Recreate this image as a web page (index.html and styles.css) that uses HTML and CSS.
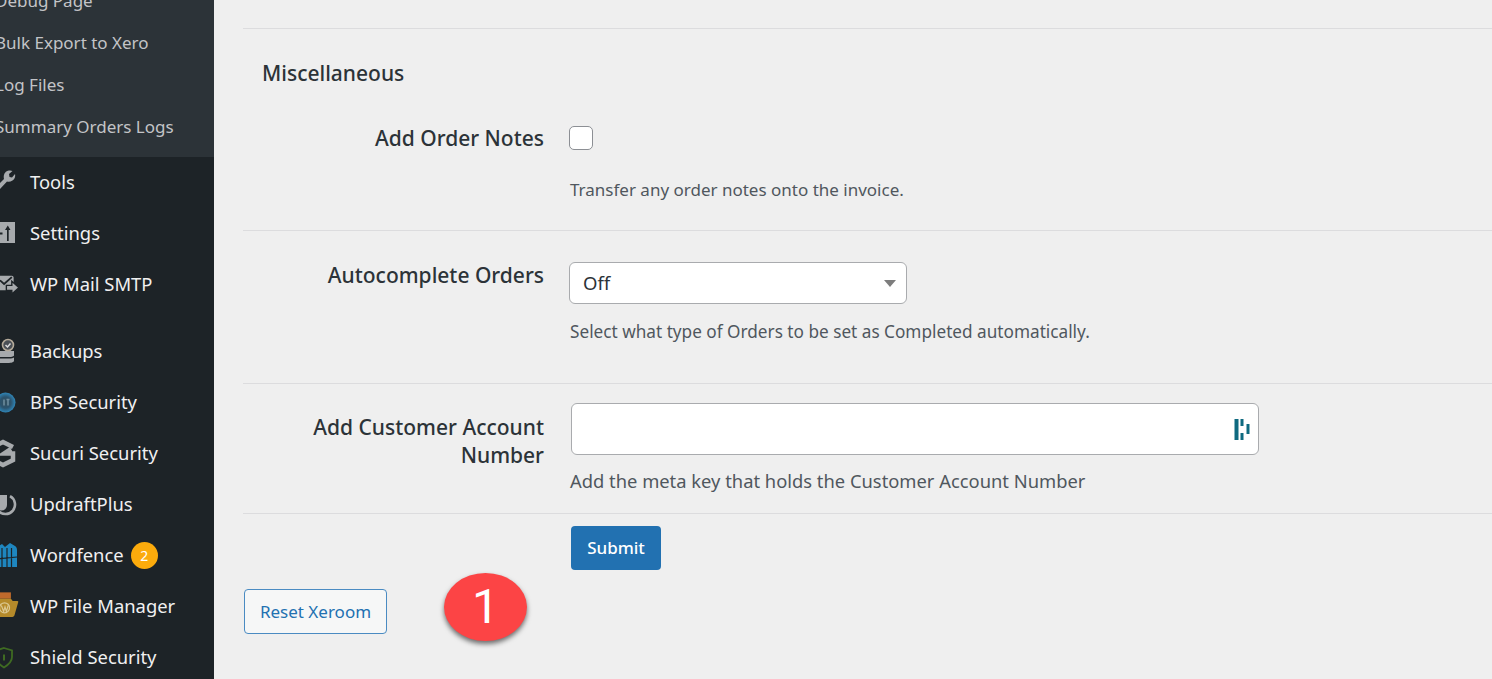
FILE: index.html
```html
<!DOCTYPE html>
<html lang="en">
<head>
<meta charset="utf-8">
<title>Xeroom settings</title>
<link rel="stylesheet" href="styles.css">
</head>
<body>
<div class="page">
  <nav class="sidebar">
    <ul class="submenu">
      <li>Debug Page</li>
      <li>Bulk Export to Xero</li>
      <li>Log Files</li>
      <li>Summary Orders Logs</li>
    </ul>
    <ul class="menu">
      <li><svg class="icon" viewBox="0 0 20 24"><path fill="#a7aaad" d="M-4 17L4 9C3 5 5 1 9 .5C10.500 .3 11.500 .5 12.500 1L9 4L9.500 7L12 7.500L15 4C15.500 6 15 9 12.500 10.500C10.500 11.800 8.500 12 7 11.500L0 19C-1 20-3 20-4 19z"/></svg>Tools</li>
      <li><svg class="icon" viewBox="0 0 20 24"><path fill="#a7aaad" d="M-3 1h18v21h-18z"/><path fill="#1d2327" d="M7 9H5L7.800 4.500L10.500 9H8.700V20H7zM-1 11.500h3.500v2h-3.500z"/></svg>Settings</li>
      <li class="gap-after"><svg class="icon" viewBox="0 0 22 24"><path fill="#a7aaad" d="M-3 3h16c1 0 2 1 2 2v14h-18z"/><path fill="none" stroke="#1d2327" stroke-width="2" d="M0 8l4.500 4L13 4.500"/><path fill="#a7aaad" stroke="#1d2327" stroke-width="1.500" d="M7 13.500h6V9l8 7-8 7v-4H7z"/></svg>WP Mail SMTP</li>
      <li><svg class="icon" viewBox="0 0 20 24"><path fill="#a7aaad" d="M-6 12h20v4.500c0 .8-2 1.500-5 1.500H-6zM-6 19.500H9c2 0 5-.5 5-1v3.500c0 1-3 2-6 2H-6z"/><circle cx="8" cy="6" r="5.500" fill="#4a4f55" stroke="#b5aa9a" stroke-width="1.600"/><path d="M5.500 6l2 2 3-3.500" fill="none" stroke="#dcdcde" stroke-width="1.500"/></svg>Backups</li>
      <li><svg class="icon" viewBox="0 0 20 24"><defs><radialGradient id="bps"><stop offset="0" stop-color="#33505f"/><stop offset=".55" stop-color="#2c536d"/><stop offset="1" stop-color="#2f86b8"/></radialGradient></defs><circle cx="5.500" cy="12.500" r="10" fill="url(#bps)"/><path stroke="#6f8ea0" stroke-width="1.500" d="M4 9.500v6M8 9.500v6M6.500 9.500h3"/></svg>BPS Security</li>
      <li><svg class="icon" viewBox="0 0 20 24"><path fill="none" stroke="#a7aaad" stroke-width="4.500" d="M13 6L3 1L-7 6V19L3 24L13 19V12.500H4L11 8"/></svg>Sucuri Security</li>
      <li><svg class="icon" viewBox="0 0 20 24"><path fill="none" stroke="#a7aaad" stroke-width="2.600" d="M10 4.200a9.500 9.500 0 1 1-9 0"/><path fill="#a7aaad" d="M-4 3h11v10a5.500 5.500 0 0 1-11 0z"/></svg>UpdraftPlus</li>
      <li><svg class="icon" viewBox="0 0 20 24"><path fill="#1e86bf" d="M-4 5L2 1L5 4L10 0L15 3C16.500 4 17 5 17 7V24H-4z"/><path fill="none" stroke="#1d2327" stroke-width="1.200" d="M2 5V24M7 5V24M11.500 5V24M-4 16L17 14"/></svg>Wordfence <span class="badge">2</span></li>
      <li><svg class="icon" viewBox="0 0 22 24"><path fill="#bf6a2c" d="M-3-3h15v7h-15z"/><path fill="#b58a2a" d="M-3 4H12L14 6.500H19C20 6.500 20.300 7.200 20 8L16 22C15.700 23 15 24 13.500 24H-3z"/><circle cx="5" cy="14" r="5.500" fill="none" stroke="#dcc891" stroke-width="1.300"/><path fill="none" stroke="#dcc891" stroke-width="1.300" d="M1.500 11.500L4 18L5.500 13L7 18L9 11.500"/></svg>WP File Manager</li>
      <li><svg class="icon" viewBox="0 0 20 24"><path fill="none" stroke="#3f6b22" stroke-width="1.800" d="M4 3L12 5.500V12C12 17 8 20 4 22.500C0 20-4 17-4 12V5.500z"/><path fill="#3f6b22" d="M3 9.500h2v6h-2z"/></svg>Shield Security</li>
    </ul>
  </nav>
  <main class="content">
    <section class="intro"></section>
    <h2 class="section-title">Miscellaneous</h2>
    <div class="row row-notes">
      <label class="label">Add Order Notes</label>
      <div class="field">
        <span class="checkbox"></span>
        <p class="desc desc-notes">Transfer any order notes onto the invoice.</p>
      </div>
    </div>
    <div class="row row-auto">
      <label class="label">Autocomplete Orders</label>
      <div class="field">
        <div class="select">Off<span class="caret"></span></div>
        <p class="desc desc-auto">Select what type of Orders to be set as Completed automatically.</p>
      </div>
    </div>
    <div class="row row-account">
      <label class="label label-account">Add Customer Account Number</label>
      <div class="field">
        <div class="text-input">
          <svg class="key-icon" viewBox="0 0 16 22"><path fill="#0f6a80" d="M0 0h4v21h-4zM6 0h3v7h-3zM6 14h3v7h-3zM12 5h3v10h-3z"/></svg>
        </div>
        <p class="desc desc-account">Add the meta key that holds the Customer Account Number</p>
      </div>
    </div>
    <div class="actions">
      <button class="btn-primary" type="button">Submit</button>
      <div class="reset-row">
        <button class="btn-secondary" type="button">Reset Xeroom</button>
        <span class="marker">1</span>
      </div>
    </div>
  </main>
</div>
</body>
</html>
```
FILE: styles.css
```css
* { box-sizing: border-box; }
html, body { margin: 0; height: 679px; overflow: hidden; }
body { font-family: "Noto Sans", sans-serif; background: #efefef; }
.page { display: flex; height: 679px; overflow: hidden; }
.sidebar { width: 214px; flex: none; background: #1d2327; overflow: hidden; }
.sidebar ul { list-style: none; margin: 0; padding: 0; }
.sidebar .submenu { background: #2c3338; color: #c3c4c7; height: 177px; margin-top: -20px; font-size: 17px; }
.submenu li { height: 42px; line-height: 41px; margin-left: -5px; white-space: nowrap; }
.menu { color: #f0f0f1; font-size: 18.400px; }
.menu li { height: 51px; display: flex; align-items: center; padding: 0 0 2px 30px; position: relative; white-space: nowrap; }
.menu .gap-after { margin-bottom: 16px; }
.icon { position: absolute; left: 0; top: 13px; width: 20px; height: 24px; overflow: visible; }
.badge { display: inline-flex; width: 27px; height: 27px; margin: 2px 0 0 7px; border-radius: 50%; background: #fcab0c; color: #fff; font-size: 14px; line-height: 27px; align-items: center; justify-content: center; }
.content { flex: 1; padding-left: 29px; min-width: 0; }
.intro { height: 29px; border-bottom: 1px solid #dcdcde; }
.section-title { margin: 29px 0 0 19px; height: 32px; font-size: 21px; line-height: 31px; font-weight: 500; color: #2c3338; }
.row { display: flex; border-bottom: 1px solid #dcdcde; }
.row-notes { height: 141px; padding-top: 35px; }
.row-auto { height: 153px; padding-top: 31px; }
.row-account { height: 130px; padding-top: 19px; }
.label { width: 301px; flex: none; text-align: right; font-size: 21px; line-height: 26px; font-weight: 500; color: #2c3338; padding-left: 50px; }
.label-account { padding-top: 10px; line-height: 28px; }
.field { margin-left: 25px; }
.checkbox { display: block; width: 24px; height: 24px; background: #fff; border: 1px solid #8c8f94; border-radius: 5px; margin-top: 1px; }
.desc { margin: 0 0 0 1px; color: #50575e; font-size: 17px; line-height: 26px; white-space: nowrap; }
.desc-notes { margin-top: 27px; }
.desc-auto { margin-top: 15px; font-size: 17.200px; }
.desc-account { margin-top: 13px; font-size: 18.350px; }
.select { width: 338px; height: 42px; background: #fff; border: 1px solid #a9abae; border-radius: 6px; font-size: 18.500px; line-height: 39px; padding-left: 13px; color: #2c3338; position: relative; }
.caret { position: absolute; right: 10px; top: 17px; border-left: 6px solid transparent; border-right: 6px solid transparent; border-top: 7px solid #7d7d7d; }
.text-input { width: 688px; height: 52px; margin-left: 2px; background: #fff; border: 1px solid #a9abae; border-radius: 6px; position: relative; }
.key-icon { position: absolute; right: 7px; top: 15px; width: 17px; height: 22px; }
.actions { padding-top: 12px; }
.btn-primary { display: block; margin-left: 328px; width: 90px; height: 44px; padding-bottom: 3px; background: #2271b1; border: 0; border-radius: 4px; color: #fff; font: 500 17px "Noto Sans", sans-serif; }
.reset-row { display: flex; align-items: center; margin-top: 3px; position: relative; margin-left: 1px; }
.btn-secondary { width: 143px; height: 45px; margin-top: 16px; background: #f6f7f7; border: 1px solid #4a8bc2; border-radius: 4px; color: #2271b1; font: 400 17px "Noto Sans", sans-serif; }
.marker { position: absolute; left: 200px; top: 0; width: 83px; height: 68px; border-radius: 50%; background: #fc4445; color: #fff; font: 400 48px/68px Roboto, sans-serif; text-align: center; box-shadow: 0 3px 5px rgba(0,0,0,.55); }
```
